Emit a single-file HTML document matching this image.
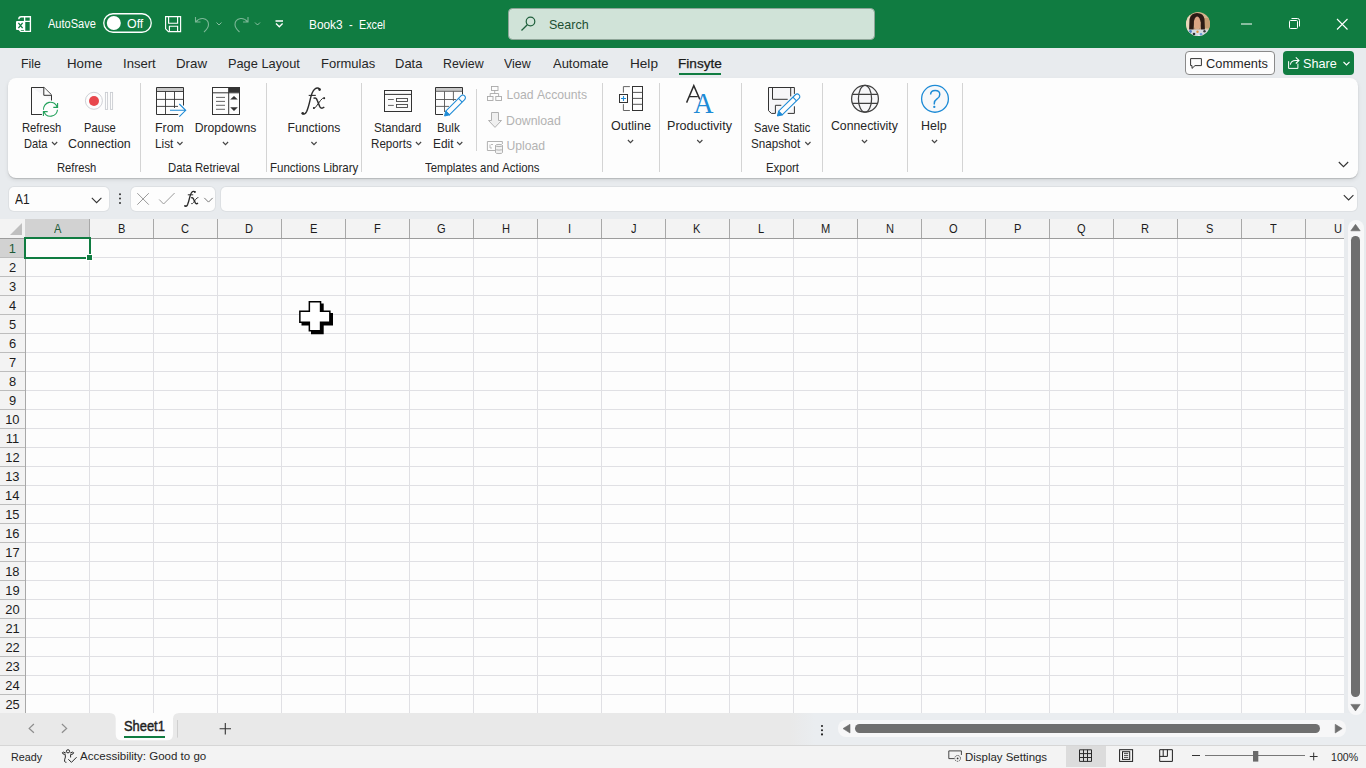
<!DOCTYPE html>
<html><head><meta charset="utf-8"><style>
*{margin:0;padding:0;box-sizing:border-box}
html,body{width:1366px;height:768px;overflow:hidden;background:#e8ebee;font-family:"Liberation Sans", sans-serif;color:#242424}
.a{position:absolute}
.t{position:absolute;white-space:nowrap;line-height:1}
svg{position:absolute;overflow:visible}
</style></head>
<body>
<div class="a" style="left:0;top:0;width:1366px;height:48px;background:#107c41"></div>
<svg style="left:0;top:0" width="1366" height="48"><path d="M18.8 19.2 Q18.8 16.7 21.2 16.7 L30.4 16.7 L30.4 31.3 L20.8 31.3 L19 29.6" fill="none" stroke="#fff" stroke-width="1.35"/><path d="M24.6 16.7 L24.6 31 M24.6 21.4 L30.4 21.4" fill="none" stroke="#fff" stroke-width="1.35"/><rect x="16" y="21" width="9" height="9" rx="1" fill="#fff"/><path d="M18.4 22.9 L22.6 28.1 M22.6 22.9 L18.4 28.1" stroke="#107c41" stroke-width="1.3"/><rect x="103.75" y="13.75" width="47.5" height="18.5" rx="9.25" fill="none" stroke="#fff" stroke-width="1.3"/><circle cx="113.8" cy="23" r="7" fill="#fff"/><path d="M165.6 16.6 L180.6 16.6 L180.6 31.6 L168.4 31.6 L165.6 28.8 Z" fill="none" stroke="#fff" stroke-width="1.15"/><path d="M168.6 16.6 L168.6 23.2 L177.6 23.2 L177.6 16.6 M169.4 31.6 L169.4 26.2 L177.6 26.2 L177.6 31.6" fill="none" stroke="#fff" stroke-width="1.15"/><path d="M195.5 17 L195.5 22 L200.5 22 M195.8 21.8 Q199 18 203 18.5 Q208.5 19.5 208.5 24.5 Q208.5 28 204 32" fill="none" stroke="rgba(255,255,255,0.45)" stroke-width="1.1"/><path d="M216.5 22.5 L219 25 L221.5 22.5" fill="none" stroke="rgba(255,255,255,0.5)" stroke-width="1"/><path d="M248 17 L248 22 L243 22 M247.7 21.8 Q244.5 18 240.5 18.5 Q235 19.5 235 24.5 Q235 28 239.5 32" fill="none" stroke="rgba(255,255,255,0.45)" stroke-width="1.1"/><path d="M255 22.5 L257.5 25 L260 22.5" fill="none" stroke="rgba(255,255,255,0.5)" stroke-width="1"/><path d="M275.5 21 L283 21 M276 23.5 L279.3 26.8 L282.6 23.5" fill="none" stroke="#fff" stroke-width="1.3"/><rect x="508.5" y="8.5" width="366" height="31" rx="4" fill="#d0e3d8" stroke="#8ea598" stroke-width="1"/><circle cx="530.5" cy="21.5" r="4.3" fill="none" stroke="#1f5f3c" stroke-width="1.2"/><path d="M527.3 24.7 L521.5 30.5" stroke="#1f5f3c" stroke-width="1.3"/><path d="M1241 24 L1252 24" stroke="#fff" stroke-width="1"/><rect x="1289.5" y="20.5" width="8" height="8" rx="1" fill="none" stroke="#fff" stroke-width="1"/><path d="M1291.5 18.5 L1297.5 18.5 Q1299.5 18.5 1299.5 20.5 L1299.5 26.5" fill="none" stroke="#fff" stroke-width="1"/><path d="M1337 19 L1347.5 29.5 M1347.5 19 L1337 29.5" stroke="#fff" stroke-width="1.1"/><clipPath id="av"><circle cx="1198" cy="24" r="12"/></clipPath><g clip-path="url(#av)"><rect x="1186" y="12" width="24" height="24" fill="#d3b38c"/><rect x="1186" y="12" width="4" height="24" fill="#e9d8bb"/><rect x="1203" y="18" width="7" height="10" fill="#c59d72"/><path d="M1189 32 L1189.5 19 Q1191 13 1197 13 Q1203.5 13 1204.5 19 L1205 31 L1201 32 L1200.5 22 L1194 22 L1193.5 32 Z" fill="#2b1b15"/><ellipse cx="1197.2" cy="22.8" rx="3.3" ry="6.2" fill="#dba584"/><path d="M1194 27 Q1197 32 1200.5 27 L1201 31 L1194 31 Z" fill="#c48b6c"/><rect x="1186" y="29.5" width="24" height="7" fill="#d6dbe2"/><circle cx="1190.5" cy="31.5" r="1.4" fill="#4f7fc0"/><circle cx="1194" cy="34" r="1.3" fill="#2d2d2d"/><circle cx="1197.5" cy="31.8" r="1.2" fill="#e0943f"/><circle cx="1201" cy="34.2" r="1.3" fill="#6b9ad6"/><circle cx="1204.5" cy="31.2" r="1.2" fill="#3a3a3a"/><circle cx="1199" cy="35.5" r="1" fill="#f0f0f0"/></g></svg>
<div class="t" style="left:48.00px;top:18.00px;font-size:12.00px;color:#ffffff;transform:scaleX(0.9197);transform-origin:0 0;">AutoSave</div>
<div class="t" style="left:127.04px;top:18.00px;font-size:12.00px;color:#ffffff;transform:scaleX(1.0327);transform-origin:0 0;">Off</div>
<div class="t" style="left:308.65px;top:19.00px;font-size:12.50px;color:#ffffff;transform:scaleX(0.9488);transform-origin:0 0;">Book3</div>
<div class="t" style="left:349.00px;top:19.00px;font-size:12.50px;color:#ffffff;transform:scaleX(0.8816);transform-origin:0 0;">-</div>
<div class="t" style="left:358.74px;top:19.00px;font-size:12.50px;color:#ffffff;transform:scaleX(0.8591);transform-origin:0 0;">Excel</div>
<div class="t" style="left:548.94px;top:18.00px;font-size:13.00px;color:#1d4f33;transform:scaleX(0.9619);transform-origin:0 0;">Search</div>
<div class="t" style="left:21.01px;top:58.00px;font-size:12.80px;color:#262626;transform:scaleX(0.9648);transform-origin:0 0;">File</div>
<div class="t" style="left:67.44px;top:58.00px;font-size:12.80px;color:#262626;transform:scaleX(1.0376);transform-origin:0 0;">Home</div>
<div class="t" style="left:123.22px;top:58.00px;font-size:12.80px;color:#262626;transform:scaleX(1.0233);transform-origin:0 0;">Insert</div>
<div class="t" style="left:175.94px;top:58.00px;font-size:12.80px;color:#262626;transform:scaleX(1.0394);transform-origin:0 0;">Draw</div>
<div class="t" style="left:227.97px;top:58.00px;font-size:12.80px;color:#262626;">Page&nbsp;Layout</div>
<div class="t" style="left:321.06px;top:58.00px;font-size:12.80px;color:#262626;transform:scaleX(1.0153);transform-origin:0 0;">Formulas</div>
<div class="t" style="left:394.96px;top:58.00px;font-size:12.80px;color:#262626;transform:scaleX(1.0160);transform-origin:0 0;">Data</div>
<div class="t" style="left:443.31px;top:58.00px;font-size:12.80px;color:#262626;transform:scaleX(0.9668);transform-origin:0 0;">Review</div>
<div class="t" style="left:503.94px;top:58.00px;font-size:12.80px;color:#262626;transform:scaleX(0.9725);transform-origin:0 0;">View</div>
<div class="t" style="left:553.30px;top:58.00px;font-size:12.80px;color:#262626;transform:scaleX(1.0134);transform-origin:0 0;">Automate</div>
<div class="t" style="left:629.81px;top:58.00px;font-size:12.80px;color:#262626;transform:scaleX(1.0619);transform-origin:0 0;">Help</div>
<div class="t" style="left:677.51px;top:58.00px;font-size:12.80px;color:#1a1a1a;transform:scaleX(1.0635);transform-origin:0 0;-webkit-text-stroke:0.25px #1a1a1a;">Finsyte</div>
<div class="a" style="left:679px;top:73px;width:42px;height:2px;background:#107c41"></div>
<div class="a" style="left:1185px;top:51px;width:90px;height:24px;background:#fdfdfd;border:1px solid #8a8a8a;border-radius:4px"></div>
<div class="a" style="left:1283px;top:51px;width:71px;height:24px;background:#107c41;border-radius:4px"></div>
<svg style="left:0;top:0" width="1366" height="200"><path d="M1190.6 58.6 L1201.4 58.6 L1201.4 65.6 L1195 65.6 L1192 68.4 L1192 65.6 L1190.6 65.6 Z" fill="none" stroke="#333" stroke-width="1"/><path d="M1288.6 61.2 L1288.6 68.4 L1297.9 68.4 L1297.9 63.6" fill="none" stroke="#fff" stroke-width="1"/><path d="M1290.4 64.6 Q1290.8 60.4 1295.6 60.4 L1298.8 60.4 M1295.8 57.3 L1299 60.4 L1295.8 63.5" fill="none" stroke="#fff" stroke-width="1.05"/><path d="M1343.5 62 L1346.5 65 L1349.5 62" fill="none" stroke="#fff" stroke-width="1.1"/></svg>
<div class="t" style="left:1206.06px;top:58.00px;font-size:12.80px;color:#262626;">Comments</div>
<div class="t" style="left:1303.43px;top:58.00px;font-size:12.80px;color:#fff;transform:scaleX(0.9872);transform-origin:0 0;">Share</div>
<div class="a" style="left:8px;top:78px;width:1350px;height:99.5px;background:#fdfdfd;border-radius:8px;box-shadow:0 1px 1px rgba(0,0,0,0.16),0 2px 4px rgba(0,0,0,0.09)"></div>
<div class="a" style="left:140px;top:83px;width:1px;height:89px;background:#d4d4d4"></div>
<div class="a" style="left:266px;top:83px;width:1px;height:89px;background:#d4d4d4"></div>
<div class="a" style="left:361px;top:83px;width:1px;height:89px;background:#d4d4d4"></div>
<div class="a" style="left:602px;top:83px;width:1px;height:89px;background:#d4d4d4"></div>
<div class="a" style="left:659px;top:83px;width:1px;height:89px;background:#d4d4d4"></div>
<div class="a" style="left:741px;top:83px;width:1px;height:89px;background:#d4d4d4"></div>
<div class="a" style="left:822px;top:83px;width:1px;height:89px;background:#d4d4d4"></div>
<div class="a" style="left:907px;top:83px;width:1px;height:89px;background:#d4d4d4"></div>
<div class="a" style="left:962px;top:83px;width:1px;height:89px;background:#d4d4d4"></div>
<div class="a" style="left:476px;top:89px;width:1px;height:62px;background:#d4d4d4"></div>
<div class="t" style="left:21.70px;top:122.00px;font-size:12.20px;color:#262626;transform:scaleX(0.9211);transform-origin:0 0;">Refresh</div>
<div class="t" style="left:23.81px;top:138.00px;font-size:12.20px;color:#262626;transform:scaleX(0.9085);transform-origin:0 0;">Data</div>
<div class="t" style="left:83.70px;top:122.00px;font-size:12.20px;color:#262626;transform:scaleX(0.9178);transform-origin:0 0;">Pause</div>
<div class="t" style="left:67.68px;top:138.00px;font-size:12.20px;color:#262626;transform:scaleX(1.0178);transform-origin:0 0;">Connection</div>
<div class="t" style="left:56.80px;top:162.00px;font-size:12.20px;color:#262626;transform:scaleX(0.9211);transform-origin:0 0;">Refresh</div>
<div class="t" style="left:155.31px;top:122.00px;font-size:12.20px;color:#262626;transform:scaleX(1.0143);transform-origin:0 0;">From</div>
<div class="t" style="left:154.56px;top:138.00px;font-size:12.20px;color:#262626;transform:scaleX(0.9646);transform-origin:0 0;">List</div>
<div class="t" style="left:194.63px;top:122.00px;font-size:12.20px;color:#262626;">Dropdowns</div>
<div class="t" style="left:167.70px;top:162.00px;font-size:12.20px;color:#262626;transform:scaleX(0.9256);transform-origin:0 0;">Data&nbsp;Retrieval</div>
<div class="t" style="left:287.53px;top:122.00px;font-size:12.20px;color:#262626;">Functions</div>
<div class="t" style="left:269.58px;top:162.00px;font-size:12.20px;color:#262626;transform:scaleX(0.9449);transform-origin:0 0;">Functions&nbsp;Library</div>
<div class="t" style="left:373.77px;top:122.00px;font-size:12.20px;color:#262626;transform:scaleX(0.9566);transform-origin:0 0;">Standard</div>
<div class="t" style="left:371.47px;top:138.00px;font-size:12.20px;color:#262626;transform:scaleX(0.9541);transform-origin:0 0;">Reports</div>
<div class="t" style="left:436.86px;top:122.00px;font-size:12.20px;color:#262626;transform:scaleX(0.9625);transform-origin:0 0;">Bulk</div>
<div class="t" style="left:432.65px;top:138.00px;font-size:12.20px;color:#262626;transform:scaleX(0.9726);transform-origin:0 0;">Edit</div>
<div class="t" style="left:506.42px;top:89.00px;font-size:12.20px;color:#b3b3b3;">Load&nbsp;Accounts</div>
<div class="t" style="left:506.41px;top:115.00px;font-size:12.20px;color:#b3b3b3;transform:scaleX(1.0103);transform-origin:0 0;">Download</div>
<div class="t" style="left:506.48px;top:140.00px;font-size:12.20px;color:#b3b3b3;">Upload</div>
<div class="t" style="left:424.77px;top:162.00px;font-size:12.20px;color:#262626;transform:scaleX(0.9342);transform-origin:0 0;">Templates&nbsp;and&nbsp;Actions</div>
<div class="t" style="left:610.83px;top:120.00px;font-size:12.20px;color:#262626;transform:scaleX(1.0326);transform-origin:0 0;">Outline</div>
<div class="t" style="left:667.19px;top:120.00px;font-size:12.20px;color:#262626;transform:scaleX(1.0306);transform-origin:0 0;">Productivity</div>
<div class="t" style="left:753.50px;top:122.00px;font-size:12.20px;color:#262626;transform:scaleX(0.9133);transform-origin:0 0;">Save&nbsp;Static</div>
<div class="t" style="left:751.48px;top:138.00px;font-size:12.20px;color:#262626;transform:scaleX(0.9561);transform-origin:0 0;">Snapshot</div>
<div class="t" style="left:765.79px;top:162.00px;font-size:12.20px;color:#262626;transform:scaleX(0.9368);transform-origin:0 0;">Export</div>
<div class="t" style="left:830.89px;top:120.00px;font-size:12.20px;color:#262626;transform:scaleX(1.0073);transform-origin:0 0;">Connectivity</div>
<div class="t" style="left:921.40px;top:120.00px;font-size:12.20px;color:#262626;transform:scaleX(1.0209);transform-origin:0 0;">Help</div>
<svg style="left:0;top:0" width="1366" height="200"><path d="M52.0 142.0 L54.6 144.60000000000002 L57.2 142.0" fill="none" stroke="#444" stroke-width="1.15"/><path d="M177.3 142.0 L179.9 144.60000000000002 L182.5 142.0" fill="none" stroke="#444" stroke-width="1.15"/><path d="M222.9 142.0 L225.5 144.60000000000002 L228.1 142.0" fill="none" stroke="#444" stroke-width="1.15"/><path d="M311.4 142.0 L314 144.60000000000002 L316.6 142.0" fill="none" stroke="#444" stroke-width="1.15"/><path d="M415.9 142.0 L418.5 144.60000000000002 L421.1 142.0" fill="none" stroke="#444" stroke-width="1.15"/><path d="M457.09999999999997 142.0 L459.7 144.60000000000002 L462.3 142.0" fill="none" stroke="#444" stroke-width="1.15"/><path d="M805.3 142.0 L807.9 144.60000000000002 L810.5 142.0" fill="none" stroke="#444" stroke-width="1.15"/><path d="M627.9 140.0 L630.5 142.60000000000002 L633.1 140.0" fill="none" stroke="#444" stroke-width="1.15"/><path d="M697.1999999999999 140.0 L699.8 142.60000000000002 L702.4 140.0" fill="none" stroke="#444" stroke-width="1.15"/><path d="M861.9 140.0 L864.5 142.60000000000002 L867.1 140.0" fill="none" stroke="#444" stroke-width="1.15"/><path d="M931.9 140.0 L934.5 142.60000000000002 L937.1 140.0" fill="none" stroke="#444" stroke-width="1.15"/><path d="M1338.8 162 L1343.5 166.7 L1348.2 162" fill="none" stroke="#333" stroke-width="1.1"/></svg>
<svg style="left:0;top:0" width="1366" height="200"><path d="M31.5 87.5 L43.8 87.5 L51.5 95 L51.5 100.3 M41.6 114.5 L31.5 114.5 Z" fill="#f6f6f8" stroke="#333333" stroke-width="1"/><path d="M31.5 87.5 L43.8 87.5 L51.5 95 L51.5 100.3 M41.6 114.5 L31.5 114.5 L31.5 87.5" fill="none" stroke="#333333" stroke-width="1"/><path d="M43.8 87.5 L43.8 95.3 L51.5 95.3" fill="#fdfdfd" stroke="#333333" stroke-width="1"/><path d="M43.53 109.81 A7 7 0 0 1 57.08 106.81 M53.3 107.4 L57.6 107.4 L57.6 103.1" fill="none" stroke="#21a05a" stroke-width="1.1"/><path d="M57.47 109.81 A7 7 0 0 1 43.92 111.59 M47.7 111.6 L43.4 111.6 L43.4 115.9" fill="none" stroke="#21a05a" stroke-width="1.1"/><circle cx="93.9" cy="100.8" r="8.5" fill="none" stroke="#c9ccd1" stroke-width="0.9"/><circle cx="94" cy="101" r="5" fill="#e8474d"/><rect x="105.4" y="92.4" width="2.2" height="17" fill="none" stroke="#c9ccd1" stroke-width="0.9"/><rect x="110.4" y="92.4" width="2.2" height="17" fill="none" stroke="#c9ccd1" stroke-width="0.9"/><rect x="156.5" y="87.5" width="27" height="4" fill="#c8c8c8"/><path d="M183.5 105.5 L183.5 87.5 L156.5 87.5 L156.5 114.5 L178.2 114.5" fill="none" stroke="#333333" stroke-width="1"/><path d="M156.5 91.5 L183.5 91.5 M165.5 91.5 L165.5 114.5 M174.5 91.5 L174.5 108 M156.5 99.4 L183.5 99.4 M156.5 106.4 L178 106.4" fill="none" stroke="#333333" stroke-width="0.9"/><path d="M170 110.3 L185.5 110.3 M179.3 104 L185.7 110.3 L179.3 116.6" fill="none" stroke="#1e8bd6" stroke-width="1.1"/><rect x="228.7" y="87.5" width="11" height="5" fill="#333333"/><rect x="212.5" y="87.5" width="27" height="27" fill="none" stroke="#333333" stroke-width="1"/><path d="M212.5 92.8 L239.5 92.8 M228.7 87.5 L228.7 114.5" stroke="#333333" stroke-width="1"/><path d="M216 97.4 L225 97.4 M216 101.4 L225 101.4 M216 105.3 L225 105.3 M216 109.3 L225 109.3" stroke="#555" stroke-width="0.9"/><path d="M230.2 99.6 L234 95.9 L237.8 99.6 Z M230.2 107.3 L237.8 107.3 L234 110.9 Z" fill="#333333"/><path d="M302.4 113.6 Q304.6 115.2 306.6 111.6 Q308.3 108 310.2 99.5 Q312 91.5 314.6 89.3 Q317.4 87 319.8 89" fill="none" stroke="#2b2b2b" stroke-width="1.35"/><path d="M308.7 95.4 L315.8 95.4" stroke="#2b2b2b" stroke-width="1.1"/><circle cx="302.7" cy="113.2" r="1.3" fill="#2b2b2b"/><circle cx="319.6" cy="89.6" r="1.3" fill="#2b2b2b"/><path d="M313.5 98.3 Q316 97 317.3 100.5 L319.7 106.5 Q321 109.5 324.3 107" fill="none" stroke="#2b2b2b" stroke-width="1.5"/><path d="M324.6 97.8 Q322.5 97.6 320.5 100.5 L316.5 106 Q315 108.6 313.2 108.2" fill="none" stroke="#2b2b2b" stroke-width="1"/><circle cx="324.2" cy="98.2" r="1" fill="#2b2b2b"/><circle cx="313.9" cy="108" r="1" fill="#2b2b2b"/><rect x="384.5" y="90.5" width="27" height="21" fill="#fbfbfb" stroke="#333333" stroke-width="1"/><path d="M384.5 94.4 L411.5 94.4" stroke="#333333" stroke-width="1"/><path d="M388 99.5 L393.8 99.5 M388 105.4 L393.8 105.4" stroke="#555" stroke-width="0.9"/><rect x="396.5" y="98.5" width="11" height="3" fill="none" stroke="#444" stroke-width="0.9"/><rect x="396.5" y="104.5" width="11" height="3" fill="none" stroke="#444" stroke-width="0.9"/><rect x="435.5" y="87.5" width="27" height="3.8" fill="#c8c8c8"/><path d="M462.5 94.5 L462.5 87.5 L435.5 87.5 L435.5 114.5 L443 114.5" fill="none" stroke="#333333" stroke-width="1"/><path d="M435.5 91.3 L462.5 91.3 M444.5 91.3 L444.5 112 M453.4 91.3 L453.4 101 M435.5 99.5 L456 99.5 M435.5 106.4 L449 106.4" fill="none" stroke="#555" stroke-width="0.9"/><path d="M449.41 114.87 L464.64 99.64 A2.6 2.6 0 0 0 460.96 95.96 L445.73 111.19 Z" fill="#fdfdfd" stroke="#1e8bd6" stroke-width="1.1"/><path d="M444.60 116.00 L449.41 114.87 L445.73 111.19 Z" fill="#1e8bd6" stroke="#1e8bd6" stroke-width="1" stroke-linejoin="round"/><path d="M462.16 102.11 L458.49 98.44" stroke="#1e8bd6" stroke-width="1.1"/><rect x="491.5" y="86.5" width="6.5" height="4" fill="none" stroke="#a9a9a9" stroke-width="0.9"/><rect x="487.5" y="96.5" width="5.5" height="4" fill="none" stroke="#a9a9a9" stroke-width="0.9"/><rect x="495.8" y="96.5" width="5.7" height="4" fill="none" stroke="#a9a9a9" stroke-width="0.9"/><path d="M494.7 90.5 L494.7 93.5 M490.2 96.5 L490.2 93.5 L498.6 93.5 L498.6 96.5" fill="none" stroke="#a9a9a9" stroke-width="0.9"/><path d="M491.5 112.5 L498.5 112.5 L498.5 120.5 L501.5 120.5 L495 127.4 L488.5 120.5 L491.5 120.5 Z" fill="#f0f0f0" stroke="#a9a9a9" stroke-width="0.9"/><path d="M495 150.5 L487.4 150.5 L487.4 141.5 L502.4 141.5 L502.4 144" fill="none" stroke="#a9a9a9" stroke-width="0.9"/><path d="M490 144.5 L490 148 L492 148 M491 144.5 L493 144.5" fill="none" stroke="#a9a9a9" stroke-width="0.8"/><path d="M495.5 145.5 L495.5 152.5 Q495.5 153.6 499 153.6 Q502.5 153.6 502.5 152.5 L502.5 145.5 Q502.5 144.4 499 144.4 Q495.5 144.4 495.5 145.5 Q495.5 146.6 499 146.6 Q502.5 146.6 502.5 145.5 M495.5 149 Q495.5 150.1 499 150.1 Q502.5 150.1 502.5 149" fill="#f3f3f3" stroke="#a9a9a9" stroke-width="0.9"/><rect x="632.5" y="86.5" width="10" height="24" fill="#fdfdfd" stroke="#333333" stroke-width="1"/><path d="M632.5 92.4 L642.5 92.4 M632.5 98.4 L642.5 98.4 M632.5 104.3 L642.5 104.3" stroke="#444" stroke-width="0.9"/><path d="M629.9 86.6 L623.4 86.6 L623.4 92.6 M623.4 104.1 L623.4 110.5 L629.9 110.5" fill="none" stroke="#555" stroke-width="0.9"/><rect x="619.5" y="94.5" width="8" height="8" fill="#fdfdfd" stroke="#333333" stroke-width="1"/><path d="M623.5 96 L623.5 101 M621 98.5 L626 98.5" stroke="#1e8bd6" stroke-width="1.1"/><path d="M686.6 102.6 L693.8 85.6 L699.8 99.4 M689.6 96.6 L697.6 96.6" fill="none" stroke="#2b2b2b" stroke-width="1.45"/><text x="693.6" y="112.9" font-family="Liberation Serif" font-size="29.5" fill="#1e8bd6" textLength="20" lengthAdjust="spacingAndGlyphs">A</text><path d="M794.4 93.9 L794.4 87.5 L768.5 87.5 L768.5 110.7 L771.4 113.4 L775.4 113.4 M787.7 113.4 L794.4 113.4 L794.4 106.3" fill="#f6f6f8" stroke="#333333" stroke-width="1"/><path d="M772.5 87.5 L772.5 99.3 L787.7 99.3 M790.7 87.5 L790.7 96.4" fill="none" stroke="#333333" stroke-width="1"/><path d="M775.4 113.4 L775.4 105.3 L781.3 105.3" fill="none" stroke="#333333" stroke-width="1"/><path d="M782.22 114.92 L799.02 98.46 A2.6 2.6 0 0 0 795.38 94.74 L778.58 111.20 Z" fill="#fdfdfd" stroke="#1e8bd6" stroke-width="1.1"/><path d="M777.40 116.00 L782.22 114.92 L778.58 111.20 Z" fill="#1e8bd6" stroke="#1e8bd6" stroke-width="1" stroke-linejoin="round"/><path d="M796.52 100.91 L792.88 97.19" stroke="#1e8bd6" stroke-width="1.1"/><circle cx="865" cy="98.8" r="13.4" fill="#f7f7f9" stroke="#404040" stroke-width="1.25"/><ellipse cx="865" cy="98.8" rx="6.6" ry="13.4" fill="none" stroke="#404040" stroke-width="1.25"/><path d="M852.5 94.3 L877.5 94.3 M852.5 103.3 L877.5 103.3" stroke="#404040" stroke-width="1.25"/><circle cx="935" cy="98.85" r="13.4" fill="#f7f8fa" stroke="#1e8bd6" stroke-width="1.3"/><path d="M930.6 94.6 Q930.6 90.4 935.2 90.4 Q939.8 90.4 939.8 94.4 Q939.8 97 937 98.9 Q934.3 100.8 934.3 103.2 L934.3 104.4" fill="none" stroke="#1e8bd6" stroke-width="1.45"/><circle cx="934.3" cy="106.9" r="1.15" fill="#1e8bd6"/></svg>
<div class="a" style="left:9px;top:187px;width:100px;height:24px;background:#fdfdfd;border-radius:5px;box-shadow:0 0 0 1px #dde0e3"></div>
<div class="a" style="left:131px;top:187px;width:84px;height:24px;background:#fdfdfd;border-radius:5px;box-shadow:0 0 0 1px #dde0e3"></div>
<div class="a" style="left:221px;top:187px;width:1136px;height:24px;background:#fdfdfd;border-radius:5px;box-shadow:0 0 0 1px #dde0e3"></div>
<div class="t" style="left:15.20px;top:192.00px;font-size:14.00px;color:#1a1a1a;transform:scaleX(0.8511);transform-origin:0 0;">A1</div>
<svg style="left:0;top:0" width="1366" height="220"><path d="M91.8 197.8 L96.6 202.6 L101.4 197.8" fill="none" stroke="#333" stroke-width="1.1"/><circle cx="120" cy="194.2" r="1" fill="#333"/><circle cx="120" cy="198.6" r="1" fill="#333"/><circle cx="120" cy="203" r="1" fill="#333"/><path d="M137.3 193.2 L148.8 204.7 M148.8 193.2 L137.3 204.7" stroke="#9a9a9a" stroke-width="1"/><path d="M159.2 199.5 L163.6 204 L174.6 193" fill="none" stroke="#9a9a9a" stroke-width="1"/><path d="M184.8 206 Q186.4 207 187.6 204.6 Q188.6 202 189.8 197 Q191 192.4 192.6 191.6 Q194.2 190.9 195.2 192" fill="none" stroke="#2b2b2b" stroke-width="1.3"/><circle cx="185" cy="205.8" r="0.9" fill="#2b2b2b"/><circle cx="194.9" cy="192" r="0.9" fill="#2b2b2b"/><path d="M187.8 194.8 L193.2 194.8" stroke="#2b2b2b" stroke-width="1"/><path d="M191.2 197.9 Q192.8 197.2 193.6 199.3 L195.4 203 Q196.2 204.4 198 203.2" fill="none" stroke="#2b2b2b" stroke-width="1.45"/><path d="M198.4 197.6 Q197.2 197.4 195.8 199.2 L193.4 202.6 Q192.4 204.2 191.2 203.6" fill="none" stroke="#2b2b2b" stroke-width="0.9"/><path d="M204.3 197.9 L208.5 202.1 L212.7 197.9" fill="none" stroke="#777" stroke-width="1"/><path d="M1343.8 195.2 L1348.6 200 L1353.4 195.2" fill="none" stroke="#333" stroke-width="1.1"/></svg>
<div class="a" style="left:0;top:219px;width:1344px;height:19px;background:#f3f3f3"></div>
<div class="a" style="left:0;top:238px;width:25px;height:475px;background:#f3f3f3"></div>
<div class="a" style="left:25px;top:238px;width:1319px;height:475px;background-color:#fdfdfd;background-image:linear-gradient(to right,#e0e0e4 1px,transparent 1px),linear-gradient(to bottom,#e0e0e4 1px,transparent 1px);background-size:64px 19px"></div>
<div class="a" style="left:25px;top:219px;width:64px;height:19px;background:#d2d2d2"></div>
<div class="a" style="left:0;top:238px;width:25px;height:19px;background:#d2d2d2"></div>
<div class="t" style="left:53.81px;top:223.00px;font-size:12.90px;color:#1e5b38;transform:scaleX(0.8600);transform-origin:0 0;">A</div>
<div class="a" style="left:89px;top:219px;width:1px;height:19px;background:#a8a8a8"></div>
<div class="t" style="left:117.64px;top:223.00px;font-size:12.90px;color:#1c1c1c;transform:scaleX(0.8600);transform-origin:0 0;">B</div>
<div class="a" style="left:153px;top:219px;width:1px;height:19px;background:#a8a8a8"></div>
<div class="t" style="left:181.42px;top:223.00px;font-size:12.90px;color:#1c1c1c;transform:scaleX(0.8600);transform-origin:0 0;">C</div>
<div class="a" style="left:217px;top:219px;width:1px;height:19px;background:#a8a8a8"></div>
<div class="t" style="left:245.31px;top:223.00px;font-size:12.90px;color:#1c1c1c;transform:scaleX(0.8600);transform-origin:0 0;">D</div>
<div class="a" style="left:281px;top:219px;width:1px;height:19px;background:#a8a8a8"></div>
<div class="t" style="left:309.59px;top:223.00px;font-size:12.90px;color:#1c1c1c;transform:scaleX(0.8600);transform-origin:0 0;">E</div>
<div class="a" style="left:345px;top:219px;width:1px;height:19px;background:#a8a8a8"></div>
<div class="t" style="left:373.89px;top:223.00px;font-size:12.90px;color:#1c1c1c;transform:scaleX(0.8600);transform-origin:0 0;">F</div>
<div class="a" style="left:409px;top:219px;width:1px;height:19px;background:#a8a8a8"></div>
<div class="t" style="left:437.31px;top:223.00px;font-size:12.90px;color:#1c1c1c;transform:scaleX(0.8600);transform-origin:0 0;">G</div>
<div class="a" style="left:473px;top:219px;width:1px;height:19px;background:#a8a8a8"></div>
<div class="t" style="left:501.51px;top:223.00px;font-size:12.90px;color:#1c1c1c;transform:scaleX(0.8600);transform-origin:0 0;">H</div>
<div class="a" style="left:537px;top:219px;width:1px;height:19px;background:#a8a8a8"></div>
<div class="t" style="left:567.97px;top:223.00px;font-size:12.90px;color:#1c1c1c;transform:scaleX(0.8600);transform-origin:0 0;">I</div>
<div class="a" style="left:601px;top:219px;width:1px;height:19px;background:#a8a8a8"></div>
<div class="t" style="left:631.06px;top:223.00px;font-size:12.90px;color:#1c1c1c;transform:scaleX(0.8600);transform-origin:0 0;">J</div>
<div class="a" style="left:665px;top:219px;width:1px;height:19px;background:#a8a8a8"></div>
<div class="t" style="left:693.42px;top:223.00px;font-size:12.90px;color:#1c1c1c;transform:scaleX(0.8600);transform-origin:0 0;">K</div>
<div class="a" style="left:729px;top:219px;width:1px;height:19px;background:#a8a8a8"></div>
<div class="t" style="left:758.14px;top:223.00px;font-size:12.90px;color:#1c1c1c;transform:scaleX(0.8600);transform-origin:0 0;">L</div>
<div class="a" style="left:793px;top:219px;width:1px;height:19px;background:#a8a8a8"></div>
<div class="t" style="left:820.90px;top:223.00px;font-size:12.90px;color:#1c1c1c;transform:scaleX(0.8600);transform-origin:0 0;">M</div>
<div class="a" style="left:857px;top:219px;width:1px;height:19px;background:#a8a8a8"></div>
<div class="t" style="left:885.51px;top:223.00px;font-size:12.90px;color:#1c1c1c;transform:scaleX(0.8600);transform-origin:0 0;">N</div>
<div class="a" style="left:921px;top:219px;width:1px;height:19px;background:#a8a8a8"></div>
<div class="t" style="left:949.20px;top:223.00px;font-size:12.90px;color:#1c1c1c;transform:scaleX(0.8600);transform-origin:0 0;">O</div>
<div class="a" style="left:985px;top:219px;width:1px;height:19px;background:#a8a8a8"></div>
<div class="t" style="left:1013.64px;top:223.00px;font-size:12.90px;color:#1c1c1c;transform:scaleX(0.8600);transform-origin:0 0;">P</div>
<div class="a" style="left:1049px;top:219px;width:1px;height:19px;background:#a8a8a8"></div>
<div class="t" style="left:1077.20px;top:223.00px;font-size:12.90px;color:#1c1c1c;transform:scaleX(0.8600);transform-origin:0 0;">Q</div>
<div class="a" style="left:1113px;top:219px;width:1px;height:19px;background:#a8a8a8"></div>
<div class="t" style="left:1141.31px;top:223.00px;font-size:12.90px;color:#1c1c1c;transform:scaleX(0.8600);transform-origin:0 0;">R</div>
<div class="a" style="left:1177px;top:219px;width:1px;height:19px;background:#a8a8a8"></div>
<div class="t" style="left:1205.81px;top:223.00px;font-size:12.90px;color:#1c1c1c;transform:scaleX(0.8600);transform-origin:0 0;">S</div>
<div class="a" style="left:1241px;top:219px;width:1px;height:19px;background:#a8a8a8"></div>
<div class="t" style="left:1270.12px;top:223.00px;font-size:12.90px;color:#1c1c1c;transform:scaleX(0.8600);transform-origin:0 0;">T</div>
<div class="a" style="left:1305px;top:219px;width:1px;height:19px;background:#a8a8a8"></div>
<div class="t" style="left:1333.61px;top:223.00px;font-size:12.90px;color:#1c1c1c;transform:scaleX(0.8600);transform-origin:0 0;">U</div>
<div class="a" style="left:0;top:238px;width:1344px;height:1px;background:#9c9c9c"></div>
<div class="a" style="left:25px;top:238px;width:1px;height:475px;background:#a8a8a8"></div>
<div class="t" style="left:8.83px;top:243.00px;font-size:12.90px;color:#1e5b38;">1</div>
<div class="a" style="left:0;top:257px;width:25px;height:1px;background:#bdbdbd"></div>
<div class="t" style="left:9.02px;top:262.00px;font-size:12.90px;color:#1c1c1c;">2</div>
<div class="a" style="left:0;top:276px;width:25px;height:1px;background:#bdbdbd"></div>
<div class="t" style="left:9.02px;top:281.00px;font-size:12.90px;color:#1c1c1c;">3</div>
<div class="a" style="left:0;top:295px;width:25px;height:1px;background:#bdbdbd"></div>
<div class="t" style="left:9.05px;top:300.00px;font-size:12.90px;color:#1c1c1c;">4</div>
<div class="a" style="left:0;top:314px;width:25px;height:1px;background:#bdbdbd"></div>
<div class="t" style="left:9.02px;top:319.00px;font-size:12.90px;color:#1c1c1c;">5</div>
<div class="a" style="left:0;top:333px;width:25px;height:1px;background:#bdbdbd"></div>
<div class="t" style="left:8.96px;top:338.00px;font-size:12.90px;color:#1c1c1c;">6</div>
<div class="a" style="left:0;top:352px;width:25px;height:1px;background:#bdbdbd"></div>
<div class="t" style="left:9.02px;top:357.00px;font-size:12.90px;color:#1c1c1c;">7</div>
<div class="a" style="left:0;top:371px;width:25px;height:1px;background:#bdbdbd"></div>
<div class="t" style="left:8.99px;top:376.00px;font-size:12.90px;color:#1c1c1c;">8</div>
<div class="a" style="left:0;top:390px;width:25px;height:1px;background:#bdbdbd"></div>
<div class="t" style="left:9.02px;top:395.00px;font-size:12.90px;color:#1c1c1c;">9</div>
<div class="a" style="left:0;top:409px;width:25px;height:1px;background:#bdbdbd"></div>
<div class="t" style="left:5.18px;top:414.00px;font-size:12.90px;color:#1c1c1c;">10</div>
<div class="a" style="left:0;top:428px;width:25px;height:1px;background:#bdbdbd"></div>
<div class="t" style="left:5.73px;top:433.00px;font-size:12.90px;color:#1c1c1c;">11</div>
<div class="a" style="left:0;top:447px;width:25px;height:1px;background:#bdbdbd"></div>
<div class="t" style="left:5.28px;top:452.00px;font-size:12.90px;color:#1c1c1c;">12</div>
<div class="a" style="left:0;top:466px;width:25px;height:1px;background:#bdbdbd"></div>
<div class="t" style="left:5.21px;top:471.00px;font-size:12.90px;color:#1c1c1c;">13</div>
<div class="a" style="left:0;top:485px;width:25px;height:1px;background:#bdbdbd"></div>
<div class="t" style="left:5.12px;top:490.00px;font-size:12.90px;color:#1c1c1c;">14</div>
<div class="a" style="left:0;top:504px;width:25px;height:1px;background:#bdbdbd"></div>
<div class="t" style="left:5.21px;top:509.00px;font-size:12.90px;color:#1c1c1c;">15</div>
<div class="a" style="left:0;top:523px;width:25px;height:1px;background:#bdbdbd"></div>
<div class="t" style="left:5.21px;top:528.00px;font-size:12.90px;color:#1c1c1c;">16</div>
<div class="a" style="left:0;top:542px;width:25px;height:1px;background:#bdbdbd"></div>
<div class="t" style="left:5.28px;top:547.00px;font-size:12.90px;color:#1c1c1c;">17</div>
<div class="a" style="left:0;top:561px;width:25px;height:1px;background:#bdbdbd"></div>
<div class="t" style="left:5.21px;top:566.00px;font-size:12.90px;color:#1c1c1c;">18</div>
<div class="a" style="left:0;top:580px;width:25px;height:1px;background:#bdbdbd"></div>
<div class="t" style="left:5.25px;top:585.00px;font-size:12.90px;color:#1c1c1c;">19</div>
<div class="a" style="left:0;top:599px;width:25px;height:1px;background:#bdbdbd"></div>
<div class="t" style="left:5.34px;top:604.00px;font-size:12.90px;color:#1c1c1c;">20</div>
<div class="a" style="left:0;top:618px;width:25px;height:1px;background:#bdbdbd"></div>
<div class="t" style="left:5.41px;top:623.00px;font-size:12.90px;color:#1c1c1c;">21</div>
<div class="a" style="left:0;top:637px;width:25px;height:1px;background:#bdbdbd"></div>
<div class="t" style="left:5.44px;top:642.00px;font-size:12.90px;color:#1c1c1c;">22</div>
<div class="a" style="left:0;top:656px;width:25px;height:1px;background:#bdbdbd"></div>
<div class="t" style="left:5.38px;top:661.00px;font-size:12.90px;color:#1c1c1c;">23</div>
<div class="a" style="left:0;top:675px;width:25px;height:1px;background:#bdbdbd"></div>
<div class="t" style="left:5.28px;top:680.00px;font-size:12.90px;color:#1c1c1c;">24</div>
<div class="a" style="left:0;top:694px;width:25px;height:1px;background:#bdbdbd"></div>
<div class="t" style="left:5.38px;top:699.00px;font-size:12.90px;color:#1c1c1c;">25</div>
<svg style="left:0;top:219px" width="25" height="19"><path d="M22 4 L22 16 L10 16 Z" fill="#bfbfbf"/></svg>
<div class="a" style="left:24px;top:237px;width:67px;height:22px;border:2px solid #107c41"></div>
<div class="a" style="left:86px;top:254px;width:7px;height:7px;background:#107c41;border:1px solid #fff"></div>
<div class="a" style="left:0;top:713px;width:1366px;height:32px;background:linear-gradient(to right,#e9e9e9 0,#e9e9e9 790px,#eaedf0 815px,#eaedf0 100%)"></div>
<svg style="left:0;top:0" width="1366" height="768"><path d="M109.5 713 Q115.7 713 115.7 719 L115.7 734.3 Q115.7 740.3 121.7 740.3 L167 740.3 Q173 740.3 173 734.3 L173 719 Q173 713 179.2 713 Z" fill="#fdfdfd"/></svg>
<div class="t" style="left:124.22px;top:719.00px;font-size:14.00px;color:#1f1f1f;transform:scaleX(0.9207);transform-origin:0 0;-webkit-text-stroke:0.45px #1f1f1f;">Sheet1</div>
<div class="a" style="left:124px;top:736px;width:41px;height:2px;background:#107c41"></div>
<div class="a" style="left:0;top:745px;width:1366px;height:23px;background:#f3f3f3;border-top:1px solid #d6d6d6"></div>
<div class="a" style="left:1066px;top:746px;width:40px;height:20.5px;background:#dcdcdc"></div>
<div class="a" style="left:838px;top:720px;width:508px;height:16.5px;background:#f7f7f8;border-radius:8px"></div>
<div class="a" style="left:855px;top:724px;width:465px;height:9px;background:#6f6f6f;border-radius:4.5px"></div>
<div class="a" style="left:1347.5px;top:219.5px;width:16px;height:495.5px;background:#f7f7f8;border-radius:8px"></div>
<div class="a" style="left:1351.2px;top:236px;width:8.8px;height:460.6px;background:#6f6f6f;border-radius:4.4px"></div>
<svg style="left:0;top:0" width="1366" height="768"><path d="M843 728.6 L850 724.3 L850 733 Z M1342.2 728.6 L1335.2 724.3 L1335.2 733 Z" fill="#6f6f6f" stroke="#6f6f6f" stroke-width="0.6" stroke-linejoin="round"/><path d="M1355.5 224.3 L1360.2 230.8 L1350.8 230.8 Z M1355.5 710.9 L1360.2 704.4 L1350.8 704.4 Z" fill="#6f6f6f" stroke="#6f6f6f" stroke-width="0.6" stroke-linejoin="round"/><circle cx="822" cy="726" r="1.05" fill="#222"/><circle cx="822" cy="730.2" r="1.05" fill="#222"/><circle cx="822" cy="734.4" r="1.05" fill="#222"/><path d="M33.9 724 L29.2 728.4 L33.9 732.8 M61.9 724 L66.6 728.4 L61.9 732.8" fill="none" stroke="#8e8e8e" stroke-width="1.25"/><path d="M177.5 720 L177.5 737.6" stroke="#cfcfcf" stroke-width="1"/><path d="M219.6 728.7 L231 728.7 M225.3 723 L225.3 734.4" stroke="#333" stroke-width="1.1"/><path d="M1079.5 749.8 L1091.5 749.8 L1091.5 761.4 L1079.5 761.4 Z M1083.5 749.8 L1083.5 761.4 M1087.5 749.8 L1087.5 761.4 M1079.5 753.6 L1091.5 753.6 M1079.5 757.5 L1091.5 757.5" fill="none" stroke="#2b2b2b" stroke-width="1"/><rect x="1119.6" y="749.7" width="13" height="11.7" fill="none" stroke="#1f1f1f" stroke-width="1"/><rect x="1122.5" y="751.7" width="7.2" height="7.7" fill="none" stroke="#1f1f1f" stroke-width="1"/><path d="M1124 753.4 L1128.2 753.4 M1124 755.4 L1128.2 755.4 M1124 757.4 L1128.2 757.4" stroke="#1f1f1f" stroke-width="0.8"/><path d="M1159.7 749.7 L1172.4 749.7 L1172.4 761.4 L1159.7 761.4 Z M1159.7 756.4 L1167.4 756.4 L1167.4 749.7 M1163.2 749.7 L1163.2 756.4" fill="none" stroke="#1f1f1f" stroke-width="1"/><path d="M1192 755.5 L1200 755.5 M1309.8 756.5 L1317.6 756.5 M1313.7 752.6 L1313.7 760.4" stroke="#333" stroke-width="1"/><path d="M1205 755.5 L1305 755.5" stroke="#777" stroke-width="1"/><rect x="1253" y="751" width="5.3" height="10.6" fill="#6a6a6a"/><circle cx="68" cy="751.3" r="1.6" fill="none" stroke="#1f1f1f" stroke-width="0.95"/><path d="M65.8 753 Q63 751.4 62.4 752.6 Q62 754.2 65.2 754.4 L65.4 757 Q64.2 760.5 64.6 761.4 Q65 762.4 66.4 762.3 M70.2 753 Q73 751.4 73.6 752.6 Q74 754.2 70.6 754.6 L70.6 757.5 M68.3 759.3 L71.5 762.3 L76.6 757.2" fill="none" stroke="#1f1f1f" stroke-width="0.95"/><path d="M954 758.6 L948.8 758.6 L948.8 750.9 L961.4 750.9 L961.4 755" fill="none" stroke="#333" stroke-width="0.9"/><circle cx="957.6" cy="758.4" r="2.9" fill="none" stroke="#333" stroke-width="0.9" stroke-dasharray="1.2 0.8"/><circle cx="957.6" cy="758.4" r="0.9" fill="#333"/></svg>
<div class="t" style="left:10.74px;top:751.00px;font-size:11.60px;color:#262626;transform:scaleX(0.9296);transform-origin:0 0;">Ready</div>
<div class="t" style="left:80.20px;top:751.00px;font-size:11.80px;color:#262626;transform:scaleX(0.9772);transform-origin:0 0;">Accessibility:&nbsp;Good&nbsp;to&nbsp;go</div>
<div class="t" style="left:964.78px;top:752.00px;font-size:11.80px;color:#262626;transform:scaleX(0.9706);transform-origin:0 0;">Display&nbsp;Settings</div>
<div class="t" style="left:1330.70px;top:751.00px;font-size:11.60px;color:#262626;transform:scaleX(0.9148);transform-origin:0 0;">100%</div>
<svg style="left:0;top:0" width="1366" height="768"><path d="M311.0 303.6 L323.7 303.6 L323.7 313.0 L333.0 313.0 L333.0 325.6 L323.7 325.6 L323.7 334.2 L311.0 334.2 L311.0 325.6 L301.5 325.6 L301.5 313.0 L311.0 313.0 Z" fill="#000"/><path d="M308.6 301.0 L321.3 301.0 L321.3 310.4 L330.6 310.4 L330.6 323.0 L321.3 323.0 L321.3 331.6 L308.6 331.6 L308.6 323.0 L299.1 323.0 L299.1 310.4 L308.6 310.4 Z" fill="#000"/><path d="M310.1 302.5 L319.8 302.5 L319.8 311.9 L329.1 311.9 L329.1 321.5 L319.8 321.5 L319.8 330.1 L310.1 330.1 L310.1 321.5 L300.6 321.5 L300.6 311.9 L310.1 311.9 Z" fill="#fff"/></svg>
</body></html>
